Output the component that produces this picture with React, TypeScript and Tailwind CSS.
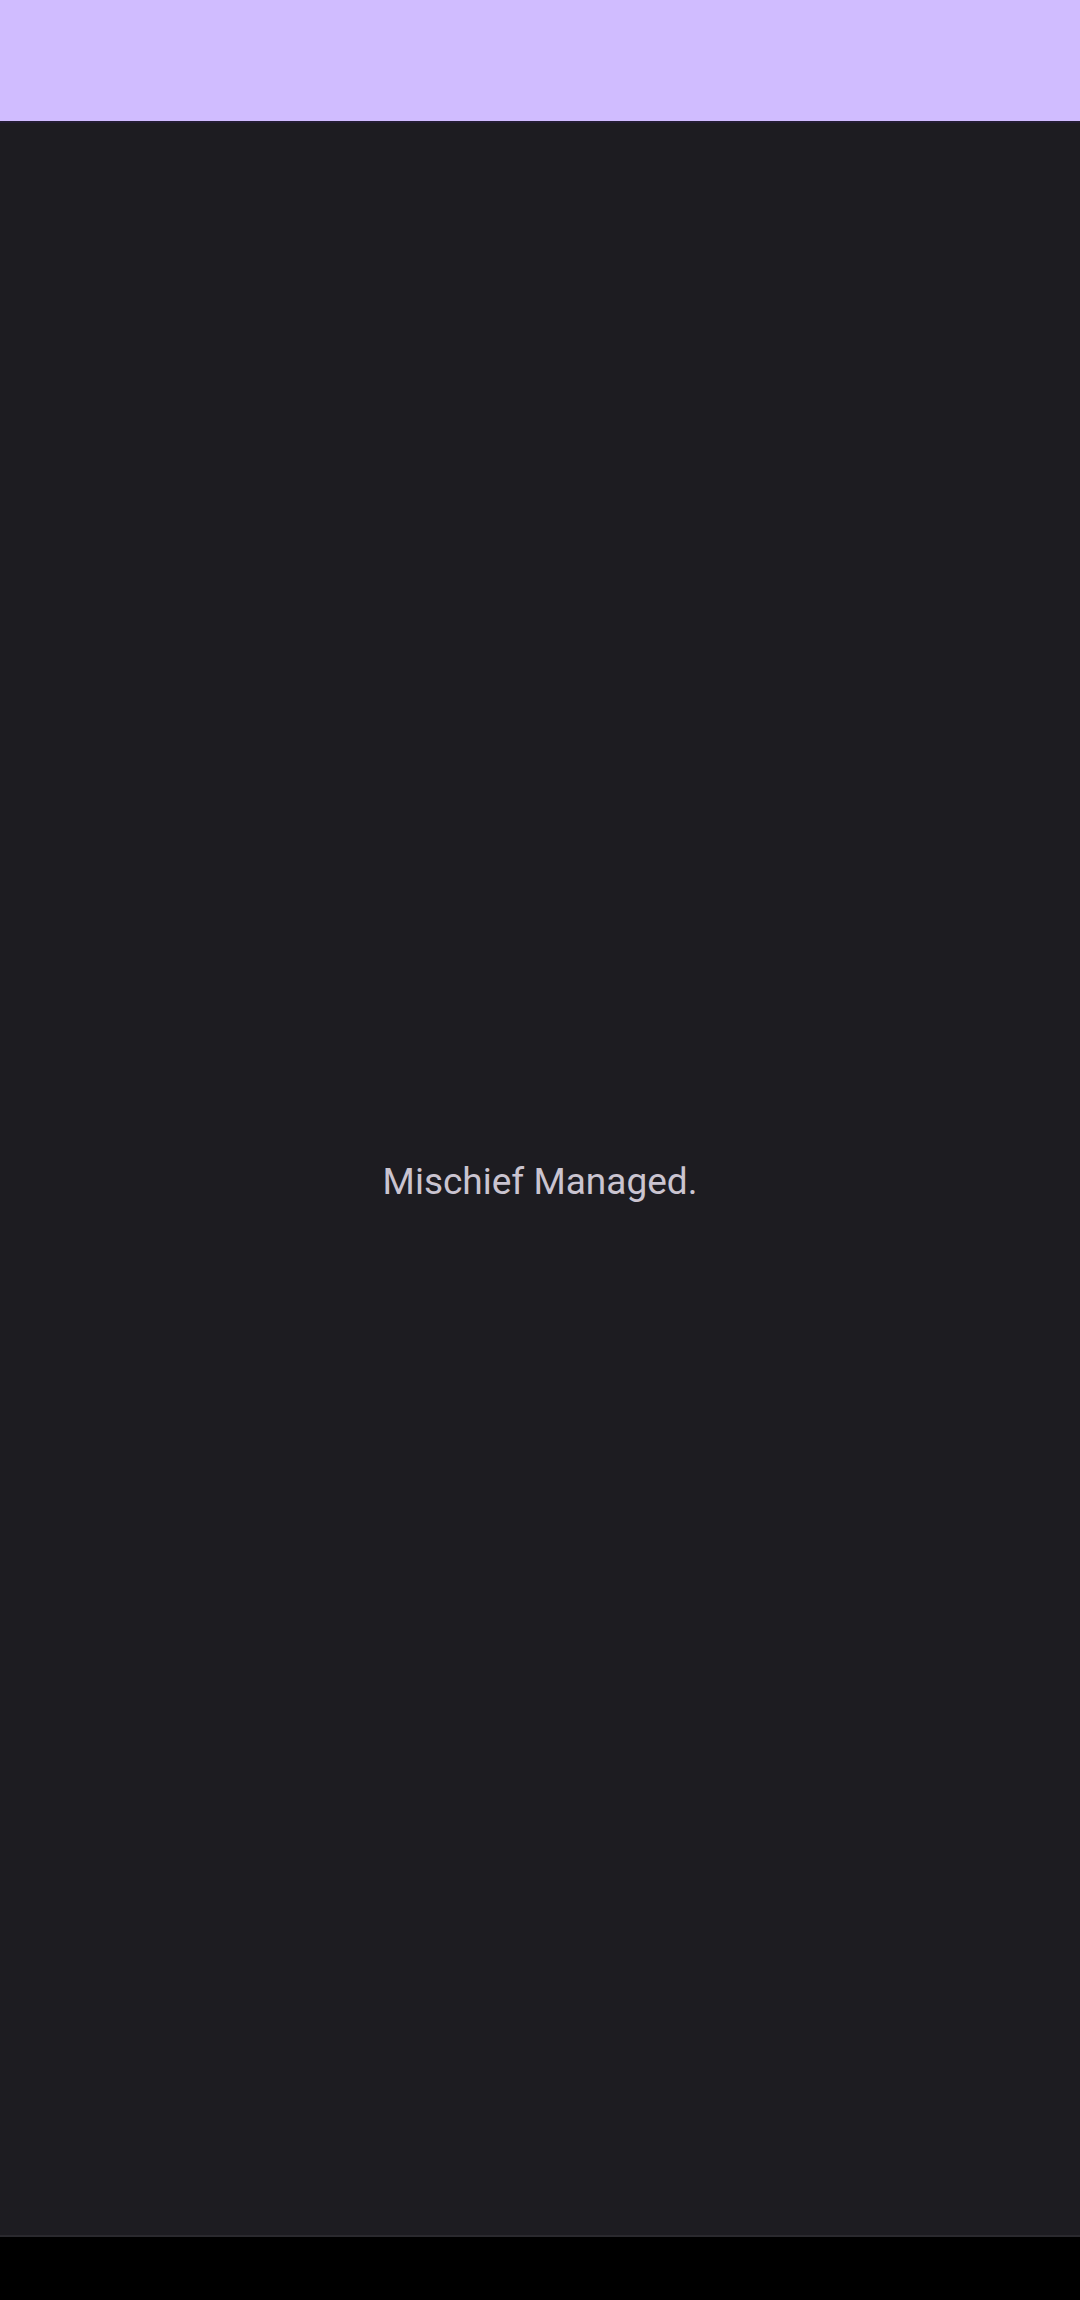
export default function App() {
  return (
    <div className="flex flex-col h-[2300px] w-full bg-black" style={{ fontFamily: 'Roboto, "Noto Sans", sans-serif' }}>
      {/* Top app bar */}
      <div className="h-[123px] bg-[#d0bcff] border-b-2 border-[#241d33]" />

      {/* Body */}
      <div className="flex-1 flex items-center justify-center bg-[#1d1c21] border-b-2 border-[#2a292e]">
        <p className="text-[37px] text-[#cac4d0] leading-none pt-1">Mischief Managed.</p>
      </div>

      {/* System nav area */}
      <div className="h-[63px] bg-black" />
    </div>
  )
}
